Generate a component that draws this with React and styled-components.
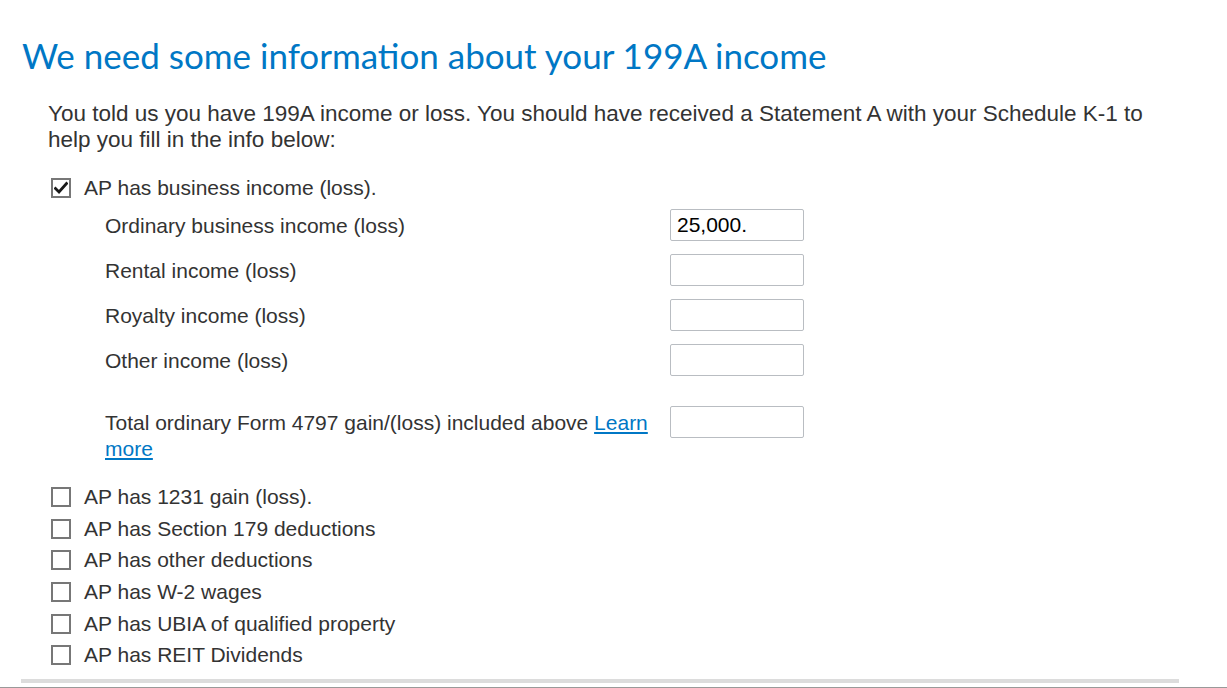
import React from 'react';
import styled, { createGlobalStyle } from 'styled-components';

const GlobalStyle = createGlobalStyle`
  body {
    margin: 0;
    background: #fff;
    font-family: "Liberation Sans", Arial, sans-serif;
  }
`;

const fields = [
  { label: 'Ordinary business income (loss)', value: '25,000.' },
  { label: 'Rental income (loss)', value: '' },
  { label: 'Royalty income (loss)', value: '' },
  { label: 'Other income (loss)', value: '' },
];

const otherOptions = [
  'AP has 1231 gain (loss).',
  'AP has Section 179 deductions',
  'AP has other deductions',
  'AP has W-2 wages',
  'AP has UBIA of qualified property',
  'AP has REIT Dividends',
];

export default function App() {
  return (
    <Page>
      <GlobalStyle />
      <Title>We need some information about your 199A income</Title>
      <Body>
        <Intro>
          You told us you have 199A income or loss. You should have received a Statement A with your Schedule K-1 to
          help you fill in the info below:
        </Intro>
        <CheckRow>
          <Box>
            <svg width="14" height="14" viewBox="0 0 14 14">
              <path d="M1.5 7.5 L5 11 L12.5 2.5" fill="none" stroke="#1a1a1a" strokeWidth="2.8" strokeLinecap="square" />
            </svg>
          </Box>
          <span>AP has business income (loss).</span>
        </CheckRow>
        <Fields>
          {fields.map((f) => (
            <FieldRow key={f.label}>
              <FieldLabel>{f.label}</FieldLabel>
              <Input defaultValue={f.value} />
            </FieldRow>
          ))}
          <FieldRow $tall>
            <FieldLabel $tall>
              Total ordinary Form 4797 gain/(loss) included above <Link href="#">Learn more</Link>
            </FieldLabel>
            <Input $tall />
          </FieldRow>
        </Fields>
        <Options>
          {otherOptions.map((o) => (
            <CheckRow key={o} $compact>
              <Box />
              <span>{o}</span>
            </CheckRow>
          ))}
        </Options>
      </Body>
      <Divider />
      <BottomLine />
    </Page>
  );
}

const Page = styled.div`
  height: 688px;
  display: flex;
  flex-direction: column;
  overflow: hidden;
`;

const Title = styled.h1`
  margin: 35px 0 0 22px;
  font-family: "Lato", sans-serif;
  font-weight: 400;
  font-size: 35px;
  line-height: 40px;
  color: #0077c5;
`;

const Body = styled.div`
  padding-left: 48px;
  color: #333;
`;

const Intro = styled.p`
  margin: 26px 0 0;
  width: 1120px;
  line-height: 26px;
  font-size: 22.5px;
`;

const CheckRow = styled.label`
  display: flex;
  align-items: center;
  gap: 13px;
  margin-top: ${(p) => (p.$compact ? '0' : '20px')};
  height: ${(p) => (p.$compact ? '31.7px' : '30px')};
  font-size: 21px;
  color: #333;
`;

const Box = styled.span`
  width: 20px;
  height: 20px;
  box-sizing: border-box;
  border: 2px solid #777;
  margin-left: 3px;
  display: flex;
  align-items: center;
  justify-content: center;
  background: #fff;
`;

const Fields = styled.div`
  padding-left: 57px;
  display: flex;
  flex-direction: column;
`;

const FieldRow = styled.div`
  display: flex;
  align-items: ${(p) => (p.$tall ? 'flex-start' : 'center')};
  margin-top: ${(p) => (p.$tall ? '23px' : '0')};
  height: ${(p) => (p.$tall ? '56px' : '45px')};
`;

const FieldLabel = styled.div`
  width: 565px;
  padding-top: ${(p) => (p.$tall ? '4px' : '0')};
  padding-right: 12px;
  box-sizing: border-box;
  font-size: 21px;
  line-height: 26px;
  color: #333;
`;

const Input = styled.input`
  width: 134px;
  height: 32px;
  margin-top: ${(p) => (p.$tall ? '0' : '-2px')};
  box-sizing: border-box;
  border: 1px solid #b9bdc2;
  border-radius: 2px;
  padding: 0 6px;
  font-family: "Liberation Sans", Arial, sans-serif;
  font-size: 21px;
  color: #000;
  outline: none;
`;

const Link = styled.a`
  color: #0077c5;
  text-decoration: underline;
`;

const Options = styled.div`
  margin-top: 19px;
`;

const Divider = styled.div`
  margin: auto 48px 0 21px;
  height: 4px;
  background: #dcdcdc;
`;

const BottomLine = styled.div`
  margin-top: 4px;
  height: 1px;
  background: #999;
`;
